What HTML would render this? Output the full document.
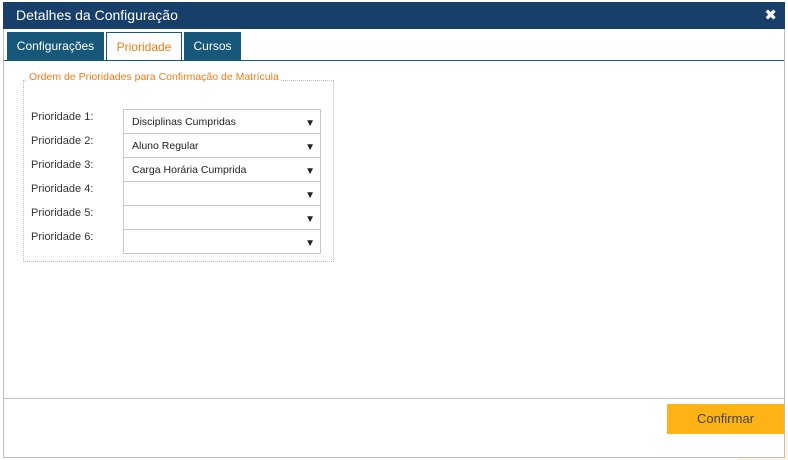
<!DOCTYPE html>
<html><head><meta charset="utf-8">
<style>
*{margin:0;padding:0;box-sizing:border-box}
body{width:788px;height:460px;background:#fff;position:relative;overflow:hidden;font-family:"Liberation Sans","DejaVu Sans",sans-serif}
.win{position:absolute;left:3px;top:2px;width:782px;height:456px;border:1px solid #bdbdbd;border-top:none;background:#fff}
.title{position:absolute;left:3px;top:2px;width:782px;height:27px;background:#173f69;color:#fff;font-size:14px;line-height:27px;padding-left:13px}
.close{position:absolute;right:8px;top:0;font-size:15px;font-weight:bold;color:#fff}
.tab{position:absolute;top:32px;height:28px;line-height:28px;font-size:12px;text-align:center;color:#fff;background:#175779}
.tab.act{background:#fff;color:#f07c14;border:1px solid #175779;border-bottom:none;height:29px}
.line{position:absolute;left:4px;top:60px;width:780px;height:1px;background:#175779}
.fs{position:absolute;left:23px;top:80px;width:311px;height:182px;border:1px dotted #bbb}
.legend{position:absolute;left:27px;top:71px;background:#fff;color:#f07c14;font-size:10.5px;padding:0 2px}
.lbl{position:absolute;left:31px;font-size:11px;color:#333}
.sel{position:absolute;left:123px;width:198px;height:25px;border:1px solid #c8c8c8;font-size:10.5px;color:#222;line-height:24px;padding-left:8px}
.sel span{position:absolute;right:5px;top:2px;font-size:10px}
.foot{position:absolute;left:4px;top:398px;width:780px;height:1px;background:#c4c4c4}
.btn{position:absolute;left:667px;top:404px;width:117px;height:30px;background:#fdb316;color:#444;font-size:13px;line-height:30px;text-align:center}
.beige{position:absolute;left:737px;top:431px;width:51px;height:29px;background:#fdf3df}
</style></head><body>
<div class="beige"></div>
<div class="win"></div>
<div class="title">Detalhes da Configuração<span class="close">✖</span></div>
<div class="tab" style="left:7px;width:97px">Configurações</div>
<div class="tab act" style="left:106px;width:76px">Prioridade</div>
<div class="tab" style="left:184px;width:57px">Cursos</div>
<div class="line"></div>
<div class="fs"></div>
<div class="legend">Ordem de Prioridades para Confirmação de Matrícula</div>
<div class="lbl" style="top:111px">Prioridade 1:</div>
<div class="lbl" style="top:135px">Prioridade 2:</div>
<div class="lbl" style="top:159px">Prioridade 3:</div>
<div class="lbl" style="top:183px">Prioridade 4:</div>
<div class="lbl" style="top:207px">Prioridade 5:</div>
<div class="lbl" style="top:231px">Prioridade 6:</div>
<div class="sel" style="top:109px">Disciplinas Cumpridas<span>▼</span></div>
<div class="sel" style="top:133px">Aluno Regular<span>▼</span></div>
<div class="sel" style="top:157px">Carga Horária Cumprida<span>▼</span></div>
<div class="sel" style="top:181px"><span>▼</span></div>
<div class="sel" style="top:205px"><span>▼</span></div>
<div class="sel" style="top:229px"><span>▼</span></div>
<div class="foot"></div>
<div class="btn">Confirmar</div>
</body></html>
